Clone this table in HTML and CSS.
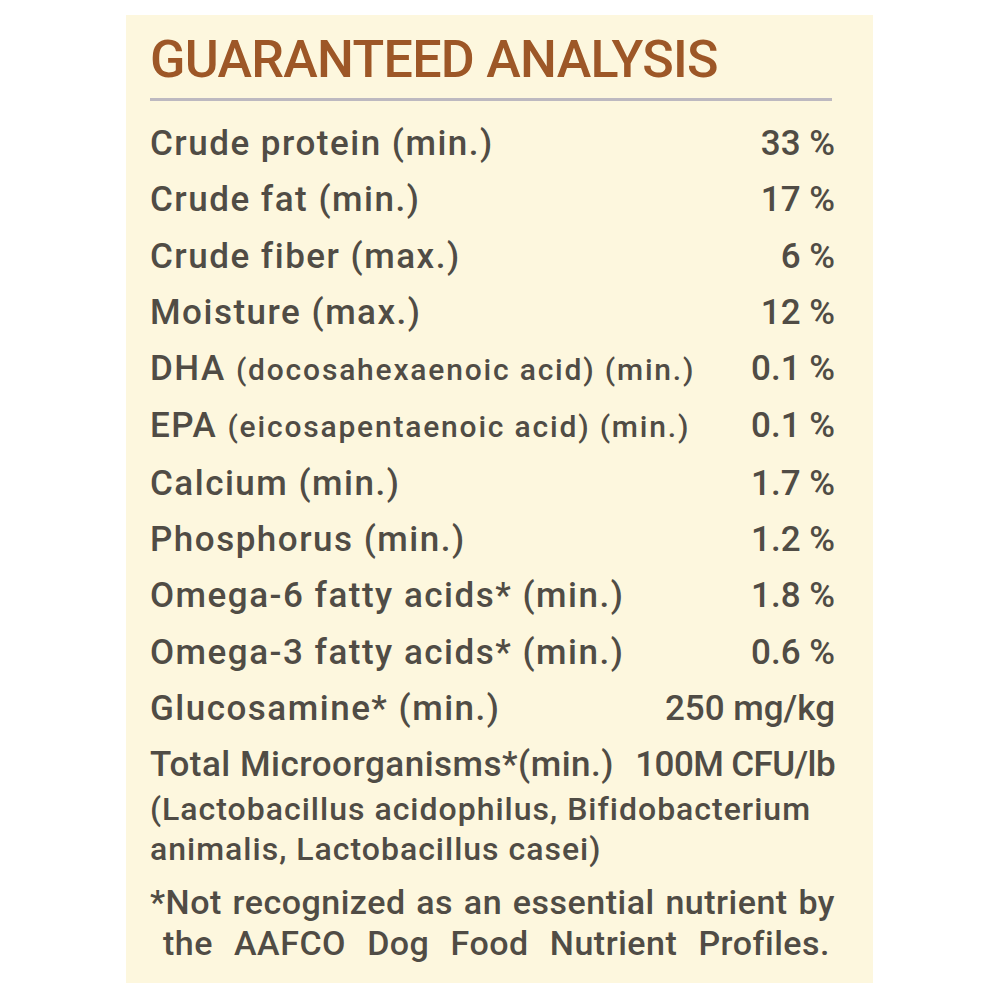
FILE: index.html
```html
<!DOCTYPE html>
<html>
<head>
<meta charset="utf-8">
<link rel="stylesheet" href="styles.css">
</head>
<body>
<div class="panel">
  <h1 class="title">GUARANTEED ANALYSIS</h1>
  <div class="rule"></div>
  <div class="rows">
    <div class="row"><span>Crude protein (min.)</span><span class="val">33 %</span></div>
    <div class="row"><span>Crude fat (min.)</span><span class="val">17 %</span></div>
    <div class="row"><span>Crude fiber (max.)</span><span class="val">6 %</span></div>
    <div class="row"><span>Moisture (max.)</span><span class="val">12 %</span></div>
    <div class="row"><span>DHA <small>(docosahexaenoic acid) (min.)</small></span><span class="val">0.1 %</span></div>
    <div class="row"><span>EPA <small>(eicosapentaenoic acid) (min.)</small></span><span class="val">0.1 %</span></div>
    <div class="row"><span>Calcium (min.)</span><span class="val">1.7 %</span></div>
    <div class="row"><span>Phosphorus (min.)</span><span class="val">1.2 %</span></div>
    <div class="row"><span>Omega-6 fatty acids* (min.)</span><span class="val">1.8 %</span></div>
    <div class="row"><span>Omega-3 fatty acids* (min.)</span><span class="val">0.6 %</span></div>
    <div class="row"><span>Glucosamine* (min.)</span><span class="val">250 mg/kg</span></div>
    <div class="row tight"><span>Total Microorganisms*(min.)</span><span class="val-tight">100M CFU/lb</span></div>
  </div>
  <p class="species">(Lactobacillus acidophilus, Bifidobacterium<br>animalis, Lactobacillus casei)</p>
  <div class="note">
    <div class="note-line">*Not recognized as an essential nutrient by</div>
    <div class="note-line indent">the AAFCO Dog Food Nutrient Profiles.</div>
  </div>
</div>
</body>
</html>
```
FILE: styles.css
```css
html, body {
  margin: 0;
  padding: 0;
  background: #ffffff;
}
body {
  font-family: Roboto, "DejaVu Sans", sans-serif;
  color: #504c45;
  font-weight: 500;
}
.panel {
  box-sizing: border-box;
  margin: 15px 0 0 126px;
  width: 747px;
  height: 968px;
  background: #fdf7de;
  padding: 19px 38px 0 24px;
}
.title {
  margin: 0;
  font-size: 52px;
  font-weight: 500;
  line-height: 52px;
  color: #9d5727;
  letter-spacing: -0.7px;
}
.rule {
  margin-top: 12px;
  height: 3px;
  background: #bdb9c0;
  margin-right: 3px;
}
.rows {
  display: flex;
  flex-direction: column;
  margin-top: 15px;
}
.row {
  display: flex;
  justify-content: space-between;
  align-items: baseline;
  font-size: 35px;
  line-height: 56.3px;
  letter-spacing: 1.5px;
  white-space: nowrap;
}
.row .val {
  letter-spacing: 0;
}
.row small {
  font-size: 30px;
  letter-spacing: 1.8px;
}
.row.tight {
  letter-spacing: 0.5px;
}
.val-tight {
  letter-spacing: -0.6px;
}
.species {
  margin: 0;
  font-size: 32px;
  line-height: 40px;
  letter-spacing: 1px;
  margin-top: -5px;
}
.note {
  margin-top: 13px;
  font-size: 34px;
  line-height: 41px;
  letter-spacing: 0.5px;
}
.note-line {
  white-space: nowrap;
  text-align: justify;
  text-align-last: justify;
}
.indent {
  padding-left: 13px;
  padding-right: 5px;
}
```
